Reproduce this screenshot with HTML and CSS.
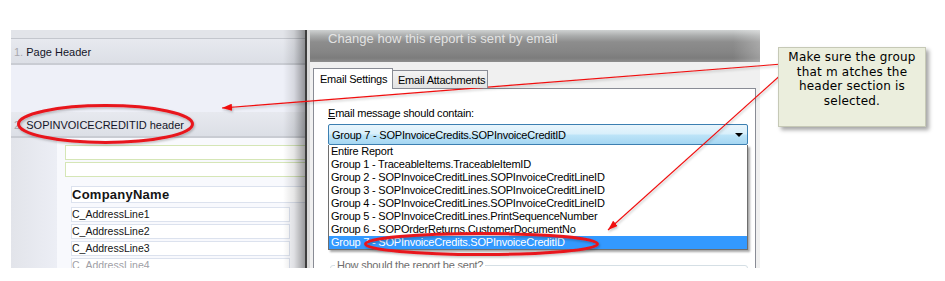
FILE: index.html
```html
<!DOCTYPE html>
<html lang="en">
<head>
<meta charset="utf-8">
<title>Email settings group</title>
<link rel="stylesheet" href="styles.css">
</head>
<body>
<div class="stage">
  <div class="shot">
    <div class="report">
      <div class="r-top"></div>
      <div class="band"><span class="num">1.</span> Page Header</div>
      <div class="r-gap"></div>
      <div class="band"><span class="num">2.</span> SOPINVOICECREDITID header</div>
      <div class="r-body">
        <div class="r-gutter"></div>
        <div class="r-canvas">
          <div class="fld-green"></div>
          <div class="fld-green"></div>
          <div class="fld-company">CompanyName</div>
          <div class="fld-addr">C_AddressLine1</div>
          <div class="fld-addr">C_AddressLine2</div>
          <div class="fld-addr">C_AddressLine3</div>
          <div class="fld-addr faded">C_AddressLine4</div>
        </div>
      </div>
    </div>
    <div class="split"></div>
    <div class="dlg">
      <div class="dlg-title">Change how this report is sent by email</div>
      <div class="dlg-body">
        <div class="tabs">
          <div class="tab active">Email Settings</div>
          <div class="tab">Email Attachments</div>
        </div>
        <div class="panel">
          <div class="lbl"><u>E</u>mail message should contain:</div>
          <div class="combo">
            <span>Group 7 - SOPInvoiceCredits.SOPInvoiceCreditID</span>
            <span class="arrow"></span>
          </div>
          <ul class="list">
            <li>Entire Report</li>
            <li>Group 1 - TraceableItems.TraceableItemID</li>
            <li>Group 2 - SOPInvoiceCreditLines.SOPInvoiceCreditLineID</li>
            <li>Group 3 - SOPInvoiceCreditLines.SOPInvoiceCreditLineID</li>
            <li>Group 4 - SOPInvoiceCreditLines.SOPInvoiceCreditLineID</li>
            <li>Group 5 - SOPInvoiceCreditLines.PrintSequenceNumber</li>
            <li>Group 6 - SOPOrderReturns.CustomerDocumentNo</li>
            <li class="sel">Group 7 - SOPInvoiceCredits.SOPInvoiceCreditID</li>
          </ul>
          <fieldset class="grp"><legend>How should the report be sent?</legend></fieldset>
        </div>
      </div>
    </div>
  </div>

  <svg class="marks" width="945" height="281" viewBox="0 0 945 281">
    <defs>
      <marker id="ah" viewBox="0 0 10 7" refX="10" refY="3.5" markerWidth="10" markerHeight="7" markerUnits="userSpaceOnUse" orient="auto">
        <path d="M0,0 L10,3.5 L0,7 z" fill="#f01010"/>
      </marker>
      <filter id="sh" x="-10%" y="-30%" width="120%" height="160%">
        <feDropShadow dx="1" dy="1.5" stdDeviation="1" flood-color="#000" flood-opacity="0.25"/>
      </filter>
    </defs>
    <g filter="url(#sh)">
      <line x1="782" y1="64" x2="222" y2="108" stroke="#f01010" stroke-width="1.1" marker-end="url(#ah)"/>
      <line x1="784" y1="72" x2="608" y2="230" stroke="#f01010" stroke-width="1.1" marker-end="url(#ah)"/>
      <ellipse cx="105.5" cy="124" rx="87" ry="18.5" fill="none" stroke="#e8161e" stroke-width="3"/>
      <ellipse cx="481.5" cy="244" rx="116" ry="10.5" fill="none" stroke="#e8161e" stroke-width="3"/>
    </g>
  </svg>

  <div class="callout">Make sure the group<br>that m atches the<br>header section is<br>selected.</div>
</div>
</body>
</html>
```
FILE: styles.css
```css
* { box-sizing: border-box; }
html, body { margin: 0; padding: 0; background: #fff; }
body { font-family: "Liberation Sans", Arial, sans-serif; }

.stage {
  position: relative;
  width: 945px;
  height: 281px;
  overflow: hidden;
  background: #fff;
}

.shot {
  display: flex;
  margin: 30px 0 0 11px;
  height: 238px;
  overflow: hidden;
}

/* ---------- left report designer ---------- */
.report {
  flex: 0 0 294px;
  width: 294px;
  height: 238px;
  display: flex;
  flex-direction: column;
  overflow: hidden;
  position: relative;
  background: #eef0f8;
}
.report > * { flex-shrink: 0; }
.report::after {
  content: "";
  position: absolute;
  top: 0; right: 0; bottom: 0;
  width: 22px;
  background: linear-gradient(90deg, rgba(0,0,0,0) 0%, rgba(0,0,0,0.10) 50%, rgba(0,0,0,0.38) 100%);
}
.r-top {
  height: 9px;
  background: #e2e4e9;
  border-bottom: 1px solid #c3c6cd;
}
.band {
  height: 26px;
  padding: 6px 0 0 3px;
  font-size: 11px;
  line-height: 14px;
  color: #141428;
  background: linear-gradient(#e7e9ef, #dcdfe6);
  border-bottom: 2px solid #c9ccd3;
  white-space: nowrap;
}
.band .num { color: #a8a8ae; }
.r-gap {
  height: 47px;
  background: #eef0f8;
}
.r-body {
  flex: 1 0 auto;
  display: flex;
}
.r-gutter {
  flex: 0 0 46px;
  background: linear-gradient(90deg, #e2e4ea, #eceef5);
}
.r-canvas {
  flex: 1 0 auto;
  background: #f8f9fd;
  padding: 7px 0 0 8px;
  font-size: 10.5px;
  color: #141414;
}
.fld-green {
  height: 15px;
  width: 260px;
  background: #fff;
  border: 1px solid #d5e6b6;
  margin-bottom: 2px;
}
.fld-company {
  margin: 9px 0 0 6px;
  width: 250px;
  height: 17px;
  border: 1px solid #dce2ee;
  background: #fff;
  font-weight: bold;
  font-size: 13px;
  letter-spacing: 0.25px;
  line-height: 15px;
  white-space: nowrap;
}
.fld-addr {
  margin: 4px 0 0 6px;
  width: 219px;
  height: 15px;
  border: 1px solid #dce2ee;
  background: #fff;
  line-height: 13px;
  white-space: nowrap;
}
.fld-addr + .fld-addr { margin-top: 2px; }
.fld-addr.faded { color: #a0a0a6; }

.split {
  flex: 0 0 5px;
  border-left: 2px solid #3e3e3e;
  background: #dadada;
}

/* ---------- dialog ---------- */
.dlg {
  flex: 0 0 450px;
  width: 450px;
  display: flex;
  flex-direction: column;
}
.dlg > * { flex-shrink: 0; }
.dlg-title {
  height: 32px;
  padding: 1px 0 0 18px;
  font-size: 13px;
  line-height: 16px;
  letter-spacing: 0.05px;
  color: rgba(236,236,236,0.9);
  background:
    linear-gradient(90deg, rgba(255,255,255,0) 94%, rgba(255,255,255,0.25) 100%),
    linear-gradient(#cfd2d2 0px, #a9abab 6px, #8d8d8d 12px, #858585 22px, #7c7c7c 28px, #8e8e8e 32px);
  white-space: nowrap;
}
.dlg-body {
  flex: 1 0 auto;
  background: #f0f0f0;
  padding: 6px 4px 0 3px;
  display: flex;
  flex-direction: column;
  font-size: 11px;
  letter-spacing: -0.22px;
  color: #000;
}
.dlg-body > * { flex-shrink: 0; }
.tabs {
  display: flex;
  align-items: flex-end;
  height: 20px;
  position: relative;
  z-index: 1;
}
.tab {
  height: 18px;
  width: 96px;
  margin-left: -1px;
  padding: 2px 0 0 5px;
  border: 1px solid #898c95;
  border-bottom: none;
  background: linear-gradient(#f3f3f3, #e2e2e2);
  line-height: 14px;
  white-space: nowrap;
}
.tab.active {
  height: 21px;
  width: 80px;
  margin: 0 0 -1px 0;
  padding: 3px 0 0 6px;
  background: #fff;
}
.panel {
  flex: 1 0 auto;
  background: #fff;
  border: 1px solid #898c95;
  border-bottom: none;
  padding: 18px 0 0 14px;
}
.lbl {
  height: 13px;
  line-height: 13px;
  white-space: nowrap;
}
.combo {
  margin-top: 4px;
  width: 420px;
  height: 21px;
  border: 1px solid #3c7fb1;
  border-radius: 2px;
  background: linear-gradient(#e9f5fc 0%, #d8effb 48%, #bde4f8 52%, #a5d6f2 100%);
  display: flex;
  align-items: center;
  justify-content: space-between;
  padding: 0 4px 0 3px;
  white-space: nowrap;
}
.arrow {
  width: 0; height: 0;
  border-left: 4px solid transparent;
  border-right: 4px solid transparent;
  border-top: 4px solid #000;
  margin-top: 1px;
}
.list {
  list-style: none;
  margin: 0;
  padding: 0;
  width: 420px;
  border: 1px solid #6e6e6e;
  border-top: none;
  background: #fff;
  box-shadow: 2px 2px 2px rgba(0,0,0,0.35);
}
.list li {
  height: 13px;
  line-height: 13px;
  padding-left: 2px;
  white-space: nowrap;
}
.list li.sel {
  background: #3399ff;
  color: #fff;
}
.grp {
  margin: 9px 0 0 2px;
  width: 418px;
  height: 40px;
  padding: 0;
  border: 1px solid #d5dfe5;
  border-radius: 3px;
}
.grp legend {
  margin-left: 4px;
  padding: 0 2px;
  color: #6e6e6e;
  font-size: 11px;
}

/* ---------- annotations ---------- */
.marks {
  position: absolute;
  left: 0;
  top: 0;
  pointer-events: none;
}
.callout {
  position: absolute;
  left: 778px;
  top: 47px;
  width: 148px;
  height: 80px;
  background: #ebeedd;
  border: 1px solid #c6c9b6;
  box-shadow: 3px 3px 4px rgba(0,0,0,0.35);
  padding-top: 2px;
  font-family: "DejaVu Sans", Verdana, sans-serif;
  font-size: 12px;
  letter-spacing: 0.2px;
  line-height: 14.7px;
  text-align: center;
  color: #000;
  white-space: nowrap;
}
```
